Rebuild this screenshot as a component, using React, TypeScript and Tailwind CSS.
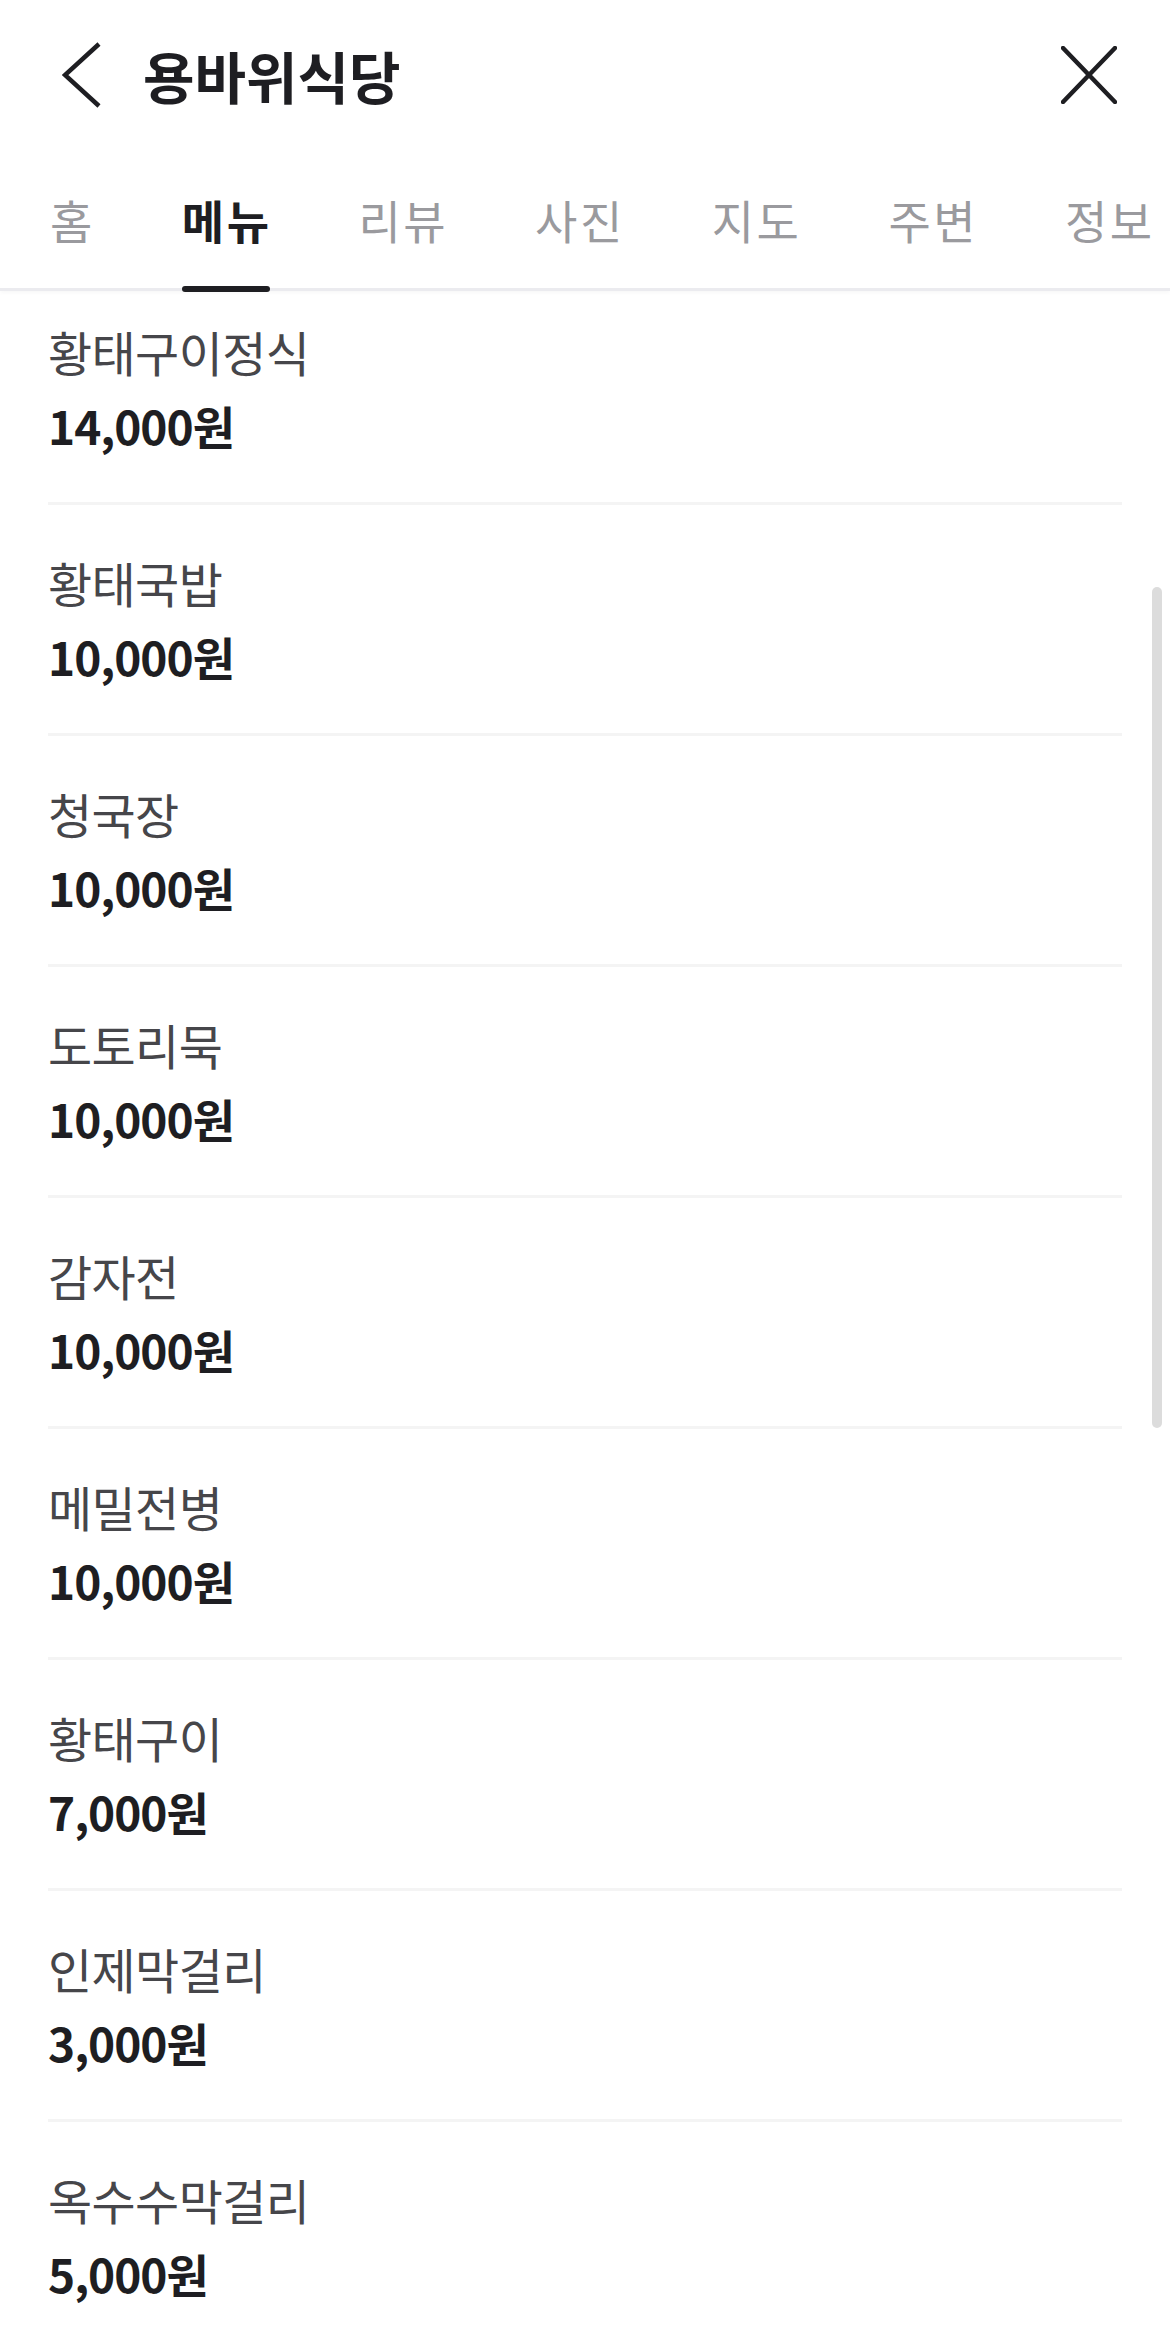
import React from "react";

type MenuItem = {
  name: string;
  price: string;
};

const menuItems: MenuItem[] = [
  { name: "황태구이정식", price: "14,000원" },
  { name: "황태국밥", price: "10,000원" },
  { name: "청국장", price: "10,000원" },
  { name: "도토리묵", price: "10,000원" },
  { name: "감자전", price: "10,000원" },
  { name: "메밀전병", price: "10,000원" },
  { name: "황태구이", price: "7,000원" },
  { name: "인제막걸리", price: "3,000원" },
  { name: "옥수수막걸리", price: "5,000원" },
];

const tabs = ["홈", "메뉴", "리뷰", "사진", "지도", "주변", "정보"];
const activeTab = "메뉴";

export default function App() {
  return (
    <div className="relative w-[1170px] h-[2326px] overflow-hidden bg-white font-['Noto_Sans_CJK_KR',sans-serif]">
      {/* Header */}
      <header className="relative z-10 bg-white border-b-[3px] border-[#ebebef] shadow-[0_2px_4px_rgba(0,0,0,0.03)]">
        <div className="h-[150px] flex items-center pl-[62px] pr-[53px]">
          <button aria-label="뒤로" className="w-[40px] h-[66px] flex items-center">
            <svg width="40" height="66" viewBox="0 0 40 66" fill="none" stroke="#1e1e22" strokeWidth="4.5">
              <path d="M37 2L3 33L37 64" />
            </svg>
          </button>
          <h1 className="ml-[41px] text-[56px] leading-none font-bold tracking-[0px] text-[#1e1e22]">
            용바위식당
          </h1>
          <button aria-label="닫기" className="ml-auto w-[56px] h-[58px] flex items-center justify-center">
            <svg width="56" height="58" viewBox="0 0 56 58" fill="none" stroke="#1e1e22" strokeWidth="4.5" strokeLinecap="round">
              <path d="M2 2L54 56M54 2L2 56" />
            </svg>
          </button>
        </div>

        {/* Tabs */}
        <nav className="h-[138px] flex items-stretch gap-[87px] pl-[50px]">
          {tabs.map((tab) => (
            <div key={tab} className="relative flex items-center shrink-0">
              <span
                className={`text-[46px] leading-none tracking-[2.5px] ${
                  tab === activeTab ? "font-bold text-[#1e1e22]" : "text-[#9a9a9e]"
                }`}
              >
                {tab}
              </span>
              {tab === activeTab && (
                <div className="absolute left-0 w-[88px] -bottom-[4px] h-[6px] rounded-full bg-[#1e1e22]" />
              )}
            </div>
          ))}
        </nav>
      </header>

      {/* Menu list */}
      <ul className="px-[48px]">
        {menuItems.map((item, index) => (
          <li
            key={item.name}
            className={`border-b-[3px] border-[#f4f4f4] pb-[47px] ${index === 0 ? "pt-[30px]" : "pt-[47px]"}`}
          >
            <div className="h-[60px] leading-[60px] text-[48px] tracking-[-0.6px] text-[#46464a]">
              {item.name}
            </div>
            <div className="mt-[14px] h-[60px] leading-[60px] text-[46px] font-bold tracking-[-1px] text-[#1e1e22]">
              {item.price}
            </div>
          </li>
        ))}
      </ul>

      {/* Scrollbar */}
      <div className="absolute left-[1152px] top-[587px] w-[10px] h-[841px] rounded-full bg-[#dcdcdc]" />
    </div>
  );
}
